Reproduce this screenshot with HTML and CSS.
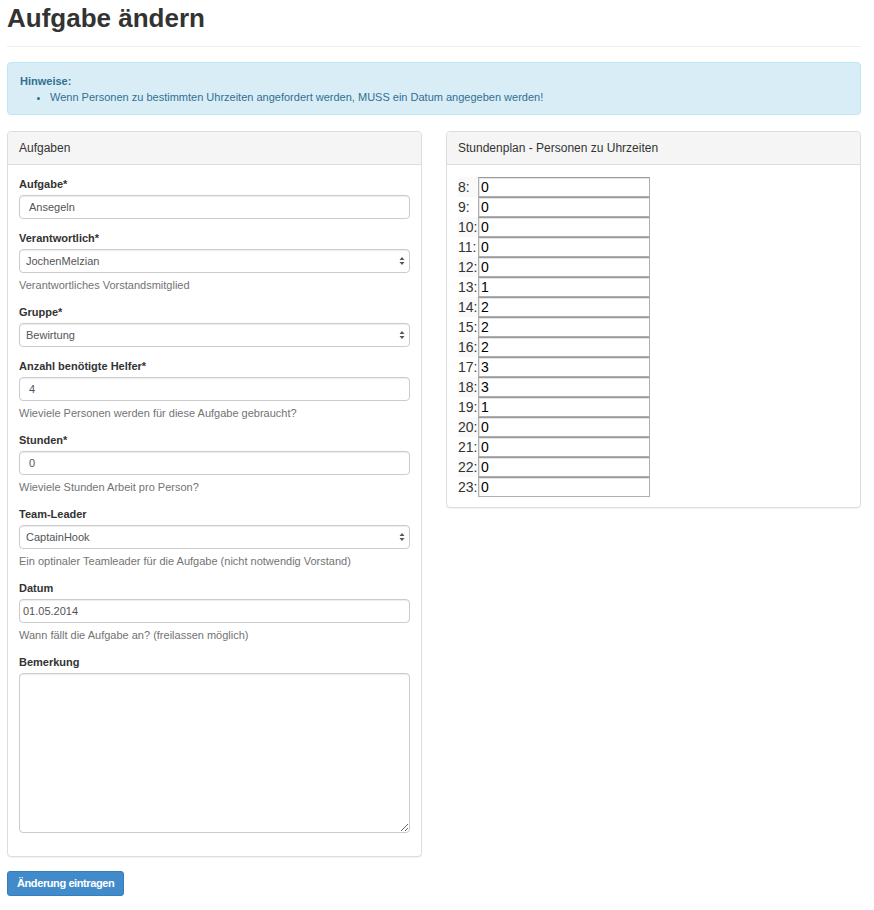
FILE: index.html
```html
<!DOCTYPE html>
<html lang="de">
<head>
<meta charset="utf-8">
<title>Aufgabe ändern</title>
<link rel="stylesheet" href="styles.css">
</head>
<body>
<div class="container">
  <h1 class="page-title">Aufgabe ändern</h1>
  <hr class="divider">
  <div class="alert">
    <strong class="alert-title">Hinweise:</strong>
    <ul class="alert-list">
      <li>Wenn Personen zu bestimmten Uhrzeiten angefordert werden, MUSS ein Datum angegeben werden!</li>
    </ul>
  </div>
  <form class="edit-form">
    <div class="columns">
      <div class="panel">
        <div class="panel-heading">Aufgaben</div>
        <div class="panel-body">
          <div class="form-group">
            <label class="control-label">Aufgabe*</label>
            <input class="form-control pad-wide" type="text" value="Ansegeln">
          </div>
          <div class="form-group">
            <label class="control-label">Verantwortlich*</label>
            <div class="select-wrap">
              <select class="form-control select"><option>JochenMelzian</option></select>
              <svg class="select-arrow" width="6" height="10" viewBox="0 0 6 10"><path d="M3 1 L5.5 4 H0.5 Z M3 9 L5.5 6 H0.5 Z" fill="#555"/></svg>
            </div>
            <p class="help-block">Verantwortliches Vorstandsmitglied</p>
          </div>
          <div class="form-group">
            <label class="control-label">Gruppe*</label>
            <div class="select-wrap">
              <select class="form-control select"><option>Bewirtung</option></select>
              <svg class="select-arrow" width="6" height="10" viewBox="0 0 6 10"><path d="M3 1 L5.5 4 H0.5 Z M3 9 L5.5 6 H0.5 Z" fill="#555"/></svg>
            </div>
          </div>
          <div class="form-group">
            <label class="control-label">Anzahl benötigte Helfer*</label>
            <input class="form-control pad-wide" type="text" value="4">
            <p class="help-block">Wieviele Personen werden für diese Aufgabe gebraucht?</p>
          </div>
          <div class="form-group">
            <label class="control-label">Stunden*</label>
            <input class="form-control pad-wide" type="text" value="0">
            <p class="help-block">Wieviele Stunden Arbeit pro Person?</p>
          </div>
          <div class="form-group">
            <label class="control-label">Team-Leader</label>
            <div class="select-wrap">
              <select class="form-control select"><option>CaptainHook</option></select>
              <svg class="select-arrow" width="6" height="10" viewBox="0 0 6 10"><path d="M3 1 L5.5 4 H0.5 Z M3 9 L5.5 6 H0.5 Z" fill="#555"/></svg>
            </div>
            <p class="help-block">Ein optinaler Teamleader für die Aufgabe (nicht notwendig Vorstand)</p>
          </div>
          <div class="form-group">
            <label class="control-label">Datum</label>
            <input class="form-control pad-narrow" type="text" value="01.05.2014">
            <p class="help-block">Wann fällt die Aufgabe an? (freilassen möglich)</p>
          </div>
          <div class="form-group">
            <label class="control-label">Bemerkung</label>
            <textarea class="form-control textarea"></textarea>
          </div>
        </div>
      </div>
      <div class="panel panel-short">
        <div class="panel-heading">Stundenplan - Personen zu Uhrzeiten</div>
        <div class="panel-body schedule-body">
          <table class="schedule">
            <tr><td class="hour">8:</td><td><input class="hour-input" type="text" value="0"></td></tr>
            <tr><td class="hour">9:</td><td><input class="hour-input" type="text" value="0"></td></tr>
            <tr><td class="hour">10:</td><td><input class="hour-input" type="text" value="0"></td></tr>
            <tr><td class="hour">11:</td><td><input class="hour-input" type="text" value="0"></td></tr>
            <tr><td class="hour">12:</td><td><input class="hour-input" type="text" value="0"></td></tr>
            <tr><td class="hour">13:</td><td><input class="hour-input" type="text" value="1"></td></tr>
            <tr><td class="hour">14:</td><td><input class="hour-input" type="text" value="2"></td></tr>
            <tr><td class="hour">15:</td><td><input class="hour-input" type="text" value="2"></td></tr>
            <tr><td class="hour">16:</td><td><input class="hour-input" type="text" value="2"></td></tr>
            <tr><td class="hour">17:</td><td><input class="hour-input" type="text" value="3"></td></tr>
            <tr><td class="hour">18:</td><td><input class="hour-input" type="text" value="3"></td></tr>
            <tr><td class="hour">19:</td><td><input class="hour-input" type="text" value="1"></td></tr>
            <tr><td class="hour">20:</td><td><input class="hour-input" type="text" value="0"></td></tr>
            <tr><td class="hour">21:</td><td><input class="hour-input" type="text" value="0"></td></tr>
            <tr><td class="hour">22:</td><td><input class="hour-input" type="text" value="0"></td></tr>
            <tr><td class="hour">23:</td><td><input class="hour-input" type="text" value="0"></td></tr>
          </table>
        </div>
      </div>
    </div>
    <button class="btn-primary" type="button">Änderung eintragen</button>
  </form>
</div>
</body>
</html>
```
FILE: styles.css
```css
* { box-sizing: border-box; }
body {
  margin: 0;
  background: #fff;
  color: #333;
  font-family: "Liberation Sans", Arial, Helvetica, sans-serif;
  font-size: 11px;
  line-height: 15px;
}
.container {
  width: 854px;
  margin-left: 7px;
}
.page-title {
  margin: 0;
  padding-top: 4px;
  font-size: 26px;
  line-height: 29px;
  font-weight: bold;
  color: #333;
  letter-spacing: 0;
}
.divider {
  margin: 13px 0 15px;
  border: 0;
  border-top: 1px solid #eee;
  height: 0;
}
.alert {
  background: #d9edf7;
  border: 1px solid #bce8f1;
  border-radius: 4px;
  color: #31708f;
  padding: 10px 12px 9px;
  line-height: 16px;
  margin-bottom: 16px;
}
.alert-title { display: block; font-weight: bold; }
.alert-list { margin: 0; padding-left: 30px; }
.columns {
  display: grid;
  grid-template-columns: 415px 415px;
  column-gap: 24px;
  align-items: start;
}
.panel {
  border: 1px solid #ddd;
  border-radius: 4px;
  box-shadow: 0 1px 1px rgba(0,0,0,.05);
  background: #fff;
}
.panel-heading {
  background: #f5f5f5;
  border-bottom: 1px solid #ddd;
  border-radius: 3px 3px 0 0;
  padding: 8px 11px;
  line-height: 16px;
  font-size: 12px;
  color: #333;
}
.panel-body { padding: 12px 11px 11px; }
.form-group { margin-bottom: 12px; }
.control-label {
  display: block;
  font-weight: bold;
  margin-bottom: 3px;
  line-height: 15px;
}
.form-control {
  display: block;
  width: 100%;
  height: 24px;
  border: 1px solid #ccc;
  border-radius: 4px;
  background: #fff;
  color: #555;
  font-family: inherit;
  font-size: 11px;
  box-shadow: inset 0 1px 1px rgba(0,0,0,.075);
  outline: none;
}
.pad-wide { padding: 0 9px; }
.pad-narrow { padding: 0 3px; }
.select-wrap { position: relative; }
.select {
  -webkit-appearance: none;
  appearance: none;
  padding: 0 6px;
  background: #fff;
}
.select-arrow {
  position: absolute;
  right: 5px;
  top: 7px;
  pointer-events: none;
}
.textarea {
  height: 160px;
  resize: vertical;
  padding: 4px 6px;
}
.help-block {
  margin: 5px 0 0;
  color: #737373;
  line-height: 15px;
}
.panel-short .schedule-body { padding: 12px 11px 10px; }
.schedule {
  border-collapse: collapse;
  border-spacing: 0;
}
.schedule td { padding: 0; height: 20px; }
.schedule tr:nth-child(odd) .hour { background: #f9f9f9; }
.hour {
  width: 20px;
  font-size: 14px;
  line-height: 20px;
  color: #333;
  white-space: nowrap;
  vertical-align: middle;
}
.hour-input {
  display: block;
  width: 172px;
  height: 20px;
  margin: 0;
  padding: 0 2px;
  border: 1px solid #b0b0b0;
  border-top-color: #999;
  box-shadow: inset 1px 1px 0 #e6e6e6;
  font-family: "Liberation Sans", Arial, sans-serif;
  font-size: 14px;
  color: #000;
  background: #fff;
  outline: none;
}
.btn-primary {
  display: inline-block;
  margin-top: 14px;
  padding: 4px 9px;
  height: 25px;
  background: #428bca;
  border: 1px solid #357ebd;
  border-radius: 3px;
  color: #fff;
  font-family: inherit;
  font-size: 11px;
  font-weight: bold;
  letter-spacing: -0.4px;
  line-height: 15px;
  cursor: pointer;
}
```
